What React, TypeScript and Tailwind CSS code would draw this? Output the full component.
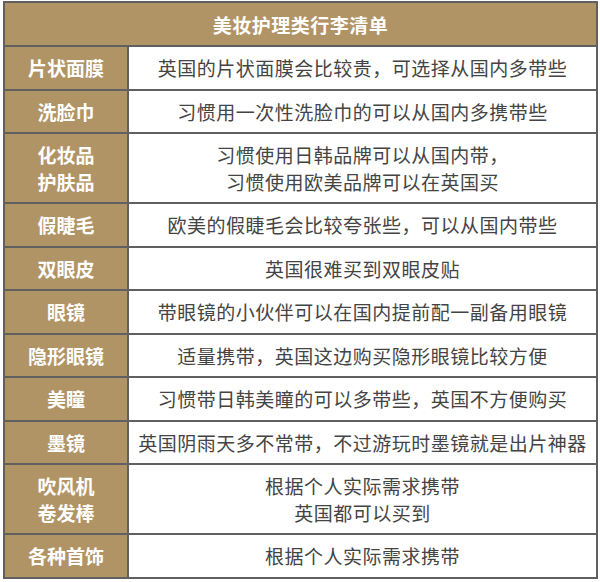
import React from "react";

const rows: { name: string[]; desc: string[]; tall?: boolean }[] = [
  { name: ["片状面膜"], desc: ["英国的片状面膜会比较贵，可选择从国内多带些"] },
  { name: ["洗脸巾"], desc: ["习惯用一次性洗脸巾的可以从国内多携带些"] },
  { name: ["化妆品", "护肤品"], desc: ["习惯使用日韩品牌可以从国内带，", "习惯使用欧美品牌可以在英国买"], tall: true },
  { name: ["假睫毛"], desc: ["欧美的假睫毛会比较夸张些，可以从国内带些"] },
  { name: ["双眼皮"], desc: ["英国很难买到双眼皮贴"] },
  { name: ["眼镜"], desc: ["带眼镜的小伙伴可以在国内提前配一副备用眼镜"] },
  { name: ["隐形眼镜"], desc: ["适量携带，英国这边购买隐形眼镜比较方便"] },
  { name: ["美瞳"], desc: ["习惯带日韩美瞳的可以多带些，英国不方便购买"] },
  { name: ["墨镜"], desc: ["英国阴雨天多不常带，不过游玩时墨镜就是出片神器"] },
  { name: ["吹风机", "卷发棒"], desc: ["根据个人实际需求携带", "英国都可以买到"], tall: true },
  { name: ["各种首饰"], desc: ["根据个人实际需求携带"] },
];

export default function App() {
  return (
    <div className="w-[600px] h-[582px] bg-white pl-[3px] pt-[1px]" style={{ fontFamily: '"Noto Sans CJK SC", "Noto Sans", sans-serif' }}>
      <table className="w-[595px] table-fixed border-collapse border-2 border-[#606060]">
        <colgroup>
          <col className="w-[124px]" />
          <col />
        </colgroup>
        <thead>
          <tr className="h-[44px] bg-[#b19466]">
            <th colSpan={2} className="border-2 border-[#606060] p-0 text-white text-[19px] font-bold tracking-[0.5px] leading-[27px]">
              美妆护理类行李清单
            </th>
          </tr>
        </thead>
        <tbody>
          {rows.map((r) => (
            <tr key={r.name.join("")} className={r.tall ? "h-[70px]" : "h-[43.5px]"}>
              <td className="border-2 border-[#606060] bg-[#b19466] p-0 text-center text-white text-[19px] font-bold leading-[27px]">
                {r.name.map((n) => (
                  <div key={n}>{n}</div>
                ))}
              </td>
              <td className="border-2 border-[#606060] bg-white p-0 text-center text-[#444] text-[19px] tracking-[0.5px] leading-[27px]">
                {r.desc.map((d) => (
                  <div key={d}>{d}</div>
                ))}
              </td>
            </tr>
          ))}
        </tbody>
      </table>
    </div>
  );
}
